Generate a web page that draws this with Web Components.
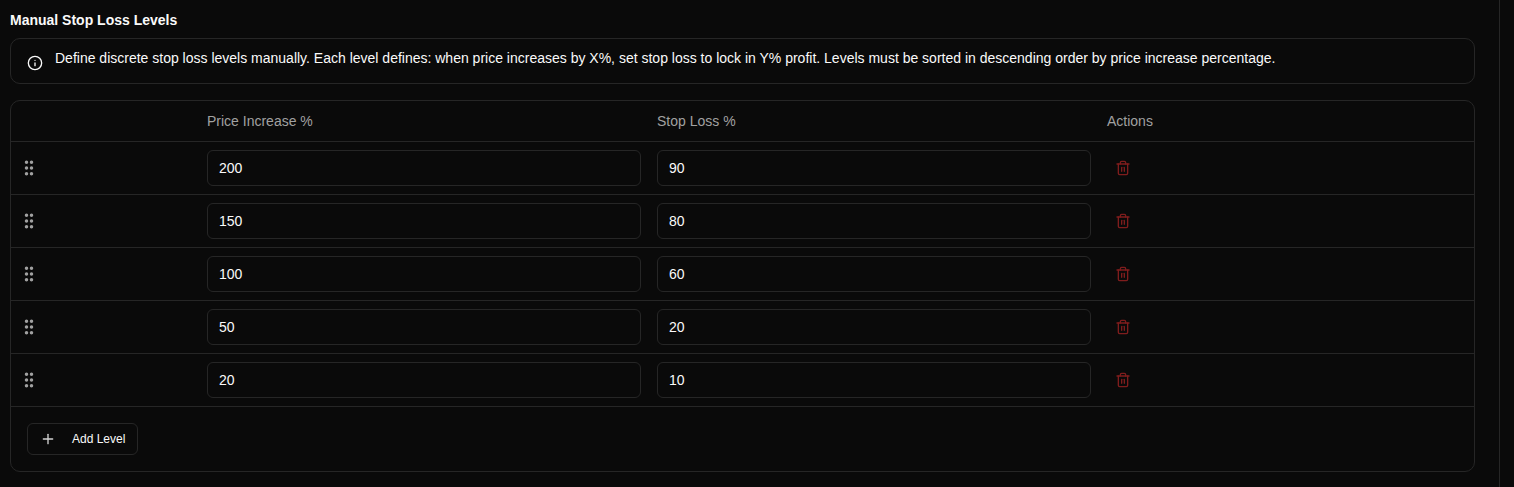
<!DOCTYPE html>
<html>
<head>
<meta charset="utf-8">
<style>
    html, body { margin: 0; height: 100%; background: #0a0a0a; overflow: hidden; }
    body { font-family: "Liberation Sans", Arial, sans-serif; color: #fafafa; }
</style>
</head>
<body>
<stop-loss-page></stop-loss-page>

<script>
const GRID = `display: grid; grid-template-columns: 188px 450px 450px 1fr;`

class InfoNote extends HTMLElement {
    constructor() {
        super()
        this.attachShadow({mode: 'open'}).innerHTML = `
            <style>
                :host {
                    display: flex;
                    gap: 12px;
                    height: 44px;
                    padding: 0 16px;
                    border: 1px solid #262626;
                    border-radius: 10px;
                    font-size: 14px;
                    line-height: 20px;
                }
                svg { width: 16px; height: 16px; margin-top: 16px; flex: none; }
                p { margin: 9px 0 0; }
            </style>
            <svg viewBox="0 0 24 24" fill="none" stroke="#fafafa" stroke-width="2" stroke-linecap="round" stroke-linejoin="round">
                <circle cx="12" cy="12" r="10"/><path d="M12 16v-4"/><path d="M12 8h.01"/>
            </svg>
            <p><slot></slot></p>`
    }
}

class LevelRow extends HTMLElement {
    constructor() {
        super()
        this.attachShadow({mode: 'open'})
    }

    connectedCallback() {
        this.shadowRoot.innerHTML = `
            <style>
                :host {
                    ${GRID}
                    height: 52px;
                    border-bottom: 1px solid #262626;
                    align-items: center;
                }
                .grip { width: 20px; height: 20px; margin-left: 8px; display: block; }
                input {
                    box-sizing: border-box;
                    width: 434px;
                    height: 36px;
                    margin-left: 8px;
                    padding: 0 11px;
                    background: transparent;
                    border: 1px solid #262626;
                    border-radius: 6px;
                    color: #fafafa;
                    font: 14px "Liberation Sans", Arial, sans-serif;
                    outline: none;
                }
                .trash { width: 16px; height: 16px; margin-left: 16px; display: block; }
            </style>
            <svg class="grip" viewBox="0 0 24 24" fill="#a1a1a1" stroke="#a1a1a1" stroke-width="2">
                <circle cx="9" cy="12" r="1.1"/><circle cx="9" cy="5" r="1.1"/><circle cx="9" cy="19" r="1.1"/>
                <circle cx="15" cy="12" r="1.1"/><circle cx="15" cy="5" r="1.1"/><circle cx="15" cy="19" r="1.1"/>
            </svg>
            <input value="${this.getAttribute('increase')}">
            <input value="${this.getAttribute('stop')}">
            <svg class="trash" viewBox="0 0 24 24" fill="none" stroke="#7f1d1d" stroke-width="2" stroke-linecap="round" stroke-linejoin="round">
                <path d="M3 6h18"/><path d="M19 6v14a2 2 0 0 1-2 2H7a2 2 0 0 1-2-2V6"/>
                <path d="M8 6V4a2 2 0 0 1 2-2h4a2 2 0 0 1 2 2v2"/>
                <path d="M10 11v6"/><path d="M14 11v6"/>
            </svg>`
    }
}

class AddButton extends HTMLElement {
    constructor() {
        super()
        this.attachShadow({mode: 'open'}).innerHTML = `
            <style>
                :host {
                    display: inline-flex;
                    box-sizing: border-box;
                    align-items: center;
                    width: 111px;
                    height: 32px;
                    padding-left: 12px;
                    gap: 16px;
                    border: 1px solid #262626;
                    border-radius: 6px;
                    font-size: 12px;
                    font-weight: 500;
                }
                svg { width: 16px; height: 16px; flex: none; }
            </style>
            <svg viewBox="0 0 24 24" fill="none" stroke="#d4d4d4" stroke-width="2" stroke-linecap="round">
                <path d="M5 12h14"/><path d="M12 5v14"/>
            </svg>
            <slot></slot>`
    }
}

class LevelsTable extends HTMLElement {
    constructor() {
        super()
        this.attachShadow({mode: 'open'}).innerHTML = `
            <style>
                :host {
                    display: block;
                    margin-top: 16px;
                    border: 1px solid #262626;
                    border-radius: 10px;
                }
                header {
                    ${GRID}
                    height: 40px;
                    border-bottom: 1px solid #262626;
                    align-items: center;
                    color: #a1a1a1;
                    font-size: 14px;
                }
                header span { padding-left: 8px; }
                footer { padding: 16px; height: 32px; }
            </style>
            <header><i></i><span>Price Increase %</span><span>Stop Loss %</span><span>Actions</span></header>
            <slot></slot>
            <footer><slot name="footer"></slot></footer>`
    }
}

class StopLossPage extends HTMLElement {
    constructor() {
        super()
        const levels = [[200, 90], [150, 80], [100, 60], [50, 20], [20, 10]]
        this.attachShadow({mode: 'open'}).innerHTML = `
            <style>
                :host {
                    display: block;
                    box-sizing: border-box;
                    width: 1500px;
                    height: 487px;
                    padding: 10px 24px 0 10px;
                    border-right: 1px solid #262626;
                }
                h3 {
                    margin: 0 0 8px;
                    font-size: 14px;
                    line-height: 20px;
                    font-weight: 700;
                }
            </style>
            <h3>Manual Stop Loss Levels</h3>
            <info-note>Define discrete stop loss levels manually. Each level defines: when price increases by X%, set stop loss to lock in Y% profit. Levels must be sorted in descending order by price increase percentage.</info-note>
            <levels-table>
                ${levels.map(([a, b]) => `<level-row increase="${a}" stop="${b}"></level-row>`).join('')}
                <add-button slot="footer">Add Level</add-button>
            </levels-table>`
    }
}

customElements.define('info-note', InfoNote)
customElements.define('level-row', LevelRow)
customElements.define('add-button', AddButton)
customElements.define('levels-table', LevelsTable)
customElements.define('stop-loss-page', StopLossPage)
</script>
</body>
</html>
